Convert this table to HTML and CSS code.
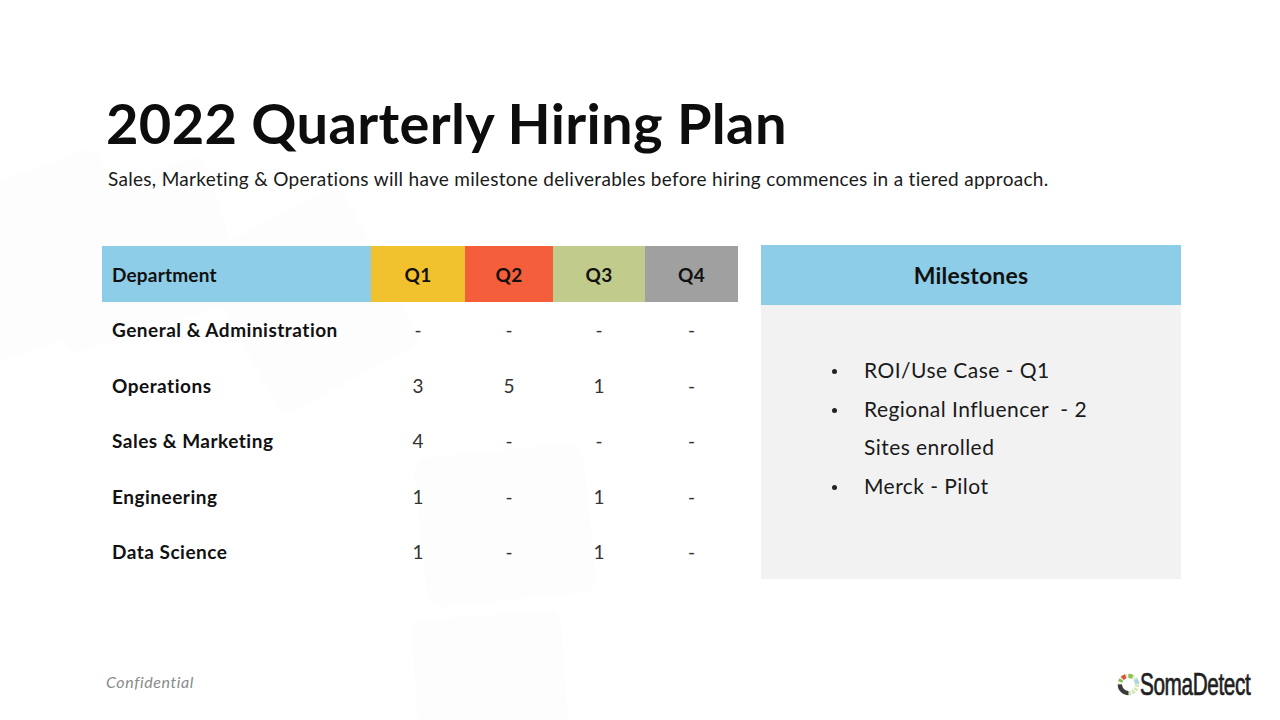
FILE: index.html
```html
<!DOCTYPE html>
<html lang="en">
<head>
<meta charset="utf-8">
<title>2022 Quarterly Hiring Plan</title>
<link rel="stylesheet" href="styles.css">
</head>
<body>
<div class="slide">
  <div class="bg-shape s1"></div>
  <div class="bg-shape s2"></div>
  <div class="bg-shape s3"></div>
  <div class="bg-shape s4"></div>
  <div class="bg-shape s5"></div>

  <header class="head">
    <h1 class="title">2022 Quarterly Hiring Plan</h1>
    <p class="subtitle">Sales, Marketing &amp; Operations will have milestone deliverables before hiring commences in a tiered approach.</p>
  </header>

  <main class="content">
    <table class="plan">
      <thead>
        <tr>
          <th class="dept-h">Department</th>
          <th class="q q1">Q1</th>
          <th class="q q2">Q2</th>
          <th class="q q3">Q3</th>
          <th class="q q4">Q4</th>
        </tr>
      </thead>
      <tbody>
        <tr><td class="dept">General &amp; Administration</td><td>-</td><td>-</td><td>-</td><td>-</td></tr>
        <tr><td class="dept">Operations</td><td>3</td><td>5</td><td>1</td><td>-</td></tr>
        <tr><td class="dept">Sales &amp; Marketing</td><td>4</td><td>-</td><td>-</td><td>-</td></tr>
        <tr><td class="dept">Engineering</td><td>1</td><td>-</td><td>1</td><td>-</td></tr>
        <tr><td class="dept">Data Science</td><td>1</td><td>-</td><td>1</td><td>-</td></tr>
      </tbody>
    </table>

    <section class="milestones">
      <h2 class="ms-head">Milestones</h2>
      <ul class="ms-list">
        <li>ROI/Use Case - Q1</li>
        <li>Regional Influencer&nbsp; - 2 Sites enrolled</li>
        <li>Merck - Pilot</li>
      </ul>
    </section>
  </main>

  <footer class="foot">
    <span class="conf">Confidential</span>
    <div class="logo">
      <svg class="logo-mark" width="23" height="23" viewBox="0 0 24 24" aria-hidden="true">
        <circle cx="12" cy="12" r="9" fill="none" stroke="#d3e6b8" stroke-width="4.5" stroke-dasharray="2.6 1.2"/>
        <path d="M5.6 5.6 A9 9 0 0 1 9 3.5" fill="none" stroke="#e0503a" stroke-width="4.5"/>
        <path d="M12 3 A9 9 0 0 1 16 4" fill="none" stroke="#8cc152" stroke-width="4.5"/>
        <path d="M19.5 7 A9 9 0 0 1 21 11" fill="none" stroke="#a8d5e6" stroke-width="4.5"/>
        <path d="M3 12 A9 9 0 0 0 12 21" fill="none" stroke="#3a3a3a" stroke-width="4.5"/>
        <path d="M3.4 9 A9 9 0 0 1 4.6 6.8" fill="none" stroke="#7dbb4a" stroke-width="4.5"/>
      </svg>
      <span class="logo-text">SomaDetect</span>
    </div>
  </footer>
</div>
</body>
</html>
```

FILE: styles.css
```css
* { box-sizing: border-box; }
html, body { margin: 0; padding: 0; background: #fff; }
body { font-family: Lato, "Noto Sans", "Liberation Sans", sans-serif; color: #111; }

.slide {
  position: relative;
  width: 1280px;
  height: 720px;
  overflow: hidden;
  background: #fff;
  display: flex;
  flex-direction: column;
}

.bg-shape {
  position: absolute;
  background: #fdfdfd;
  border-radius: 14px;
  z-index: 0;
}
.s1 { left: -40px; top: 170px; width: 170px; height: 170px; transform: rotate(-20deg); }
.s2 { left: 40px; top: 180px; width: 190px; height: 150px; transform: rotate(-18deg); }
.s3 { left: 230px; top: 210px; width: 160px; height: 180px; transform: rotate(-28deg); }
.s4 { left: 420px; top: 450px; width: 170px; height: 150px; transform: rotate(-6deg); }
.s5 { left: 415px; top: 615px; width: 150px; height: 130px; transform: rotate(-4deg); }

.head, .content, .foot { position: relative; z-index: 1; }

.head { padding: 90px 0 0 106px; }
.title {
  margin: 0;
  font-size: 56px;
  font-weight: 700;
  line-height: 66px;
  letter-spacing: 0.35px;
  color: #0d0d0d;
}
.subtitle {
  margin: 11px 0 0 2px;
  font-size: 19px;
  line-height: 24px;
  letter-spacing: 0.3px;
  color: #1a1a1a;
}

.content {
  display: flex;
  align-items: flex-start;
  gap: 23px;
  padding: 55px 0 0 102px;
}

.plan {
  border-collapse: collapse;
  width: 636px;
  font-size: 19px;
}
.plan th {
  height: 56px;
  font-weight: 700;
  color: #111;
  padding: 0;
  letter-spacing: 0.2px;
}
.dept-h { width: 269px; background: #8ecde8; text-align: left; padding-left: 10px !important; }
.q { text-align: center; }
.q1 { width: 94px; background: #f2c12e; }
.q2 { width: 88px; background: #f45e3a; }
.q3 { width: 92px; background: #c1cc8c; }
.q4 { width: 93px; background: #a0a0a0; }

.plan td {
  height: 55.5px;
  text-align: center;
  color: #333;
  padding: 0;
}
.plan td.dept {
  text-align: left;
  padding-left: 10px;
  font-weight: 700;
  letter-spacing: 0.5px;
  color: #111;
}

.milestones {
  width: 420px;
  height: 334px;
  margin-top: -1px;
  background: #f2f2f2;
}
.ms-head {
  margin: 0;
  height: 60px;
  background: #8ecde8;
  display: flex;
  align-items: center;
  justify-content: center;
  font-size: 23px;
  font-weight: 700;
  letter-spacing: 0.2px;
  color: #111;
}
.ms-list {
  list-style: none;
  margin: 46px 0 0 0;
  padding: 0 80px 0 103px;
  font-size: 21px;
  line-height: 38.5px;
  letter-spacing: 0.45px;
  color: #1a1a1a;
}
.ms-list li { position: relative; }
.ms-list li::before {
  content: "";
  position: absolute;
  left: -32px;
  top: 18px;
  width: 5px;
  height: 5px;
  border-radius: 50%;
  background: #222;
}

.foot {
  margin-top: auto;
  display: flex;
  align-items: center;
  justify-content: space-between;
  padding: 0 30px 20px 106px;
}
.conf {
  font-style: italic;
  font-size: 16px;
  letter-spacing: 0.6px;
  color: #8a8a8a;
  margin-bottom: 6px;
}
.logo {
  display: flex;
  align-items: center;
  gap: 0;
}
.logo-mark { display: block; }
.logo-text {
  font-family: "Liberation Sans", "DejaVu Sans", sans-serif;
  font-size: 31px;
  font-weight: 400;
  -webkit-text-stroke: 0.7px #1f1f1f;
  letter-spacing: -0.6px;
  color: #1f1f1f;
  line-height: 1;
  display: inline-block;
  width: 110px;
  white-space: nowrap;
  transform: scaleX(0.67);
  transform-origin: left center;
}
```
